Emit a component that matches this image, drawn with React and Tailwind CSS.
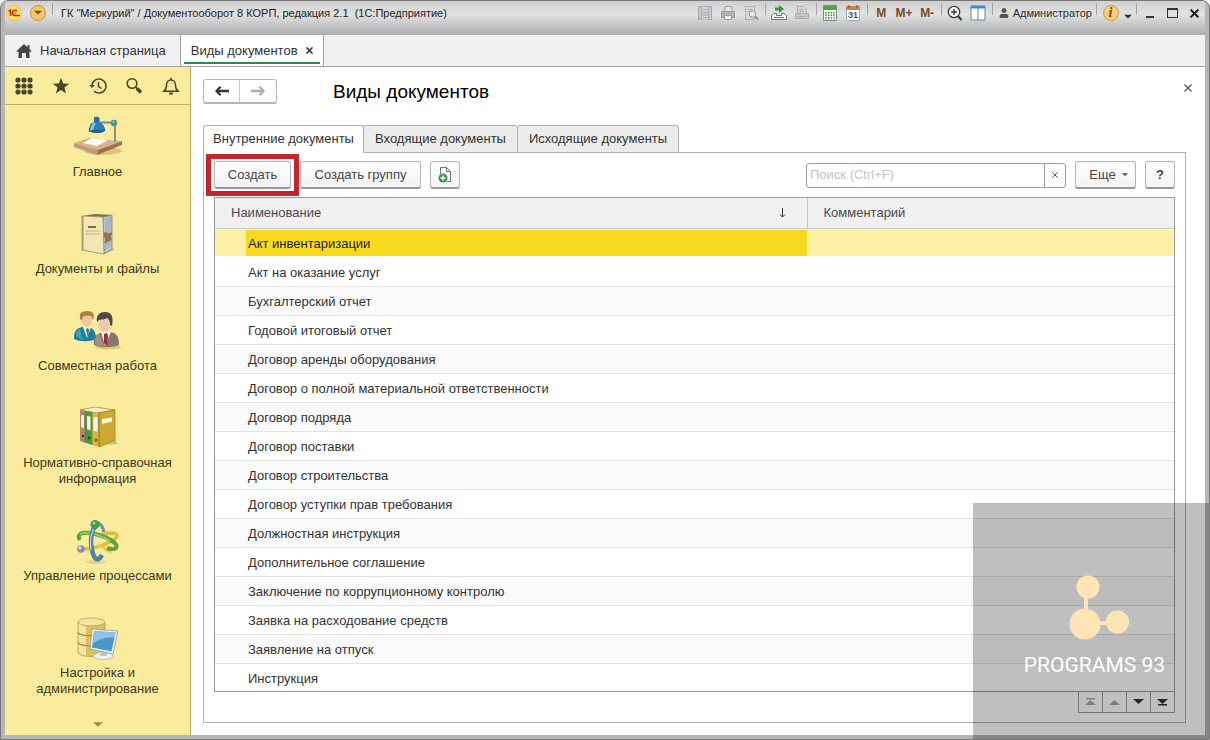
import React from 'react';
import { FaUser } from 'react-icons/fa';

const SECTIONS = [
    { label: 'Главное', Icon: LampIcon },
    { label: 'Документы и файлы', Icon: BookIcon },
    { label: 'Совместная работа', Icon: PeopleIcon },
    { label: 'Нормативно-справочная информация', Icon: BindersIcon },
    { label: 'Управление процессами', Icon: OrbitIcon },
    { label: 'Настройка и администрирование', Icon: DatabaseIcon },
];

const TABS = [
    { label: 'Внутренние документы', width: 'w-[161px]' },
    { label: 'Входящие документы', width: 'w-[155px]' },
    { label: 'Исходящие документы', width: 'w-[162px]' },
];

const ROWS = [
    'Акт инвентаризации',
    'Акт на оказание услуг',
    'Бухгалтерский отчет',
    'Годовой итоговый отчет',
    'Договор аренды оборудования',
    'Договор о полной материальной ответственности',
    'Договор подряда',
    'Договор поставки',
    'Договор строительства',
    'Договор уступки прав требования',
    'Должностная инструкция',
    'Дополнительное соглашение',
    'Заключение по коррупционному контролю',
    'Заявка на расходование средств',
    'Заявление на отпуск',
    'Инструкция',
];

/* ---------- Section icons ---------- */

function LampIcon() {
    return (
        <svg width="52" height="44" viewBox="0 0 52 44" aria-hidden="true">
            <ellipse cx="31" cy="35" rx="19" ry="4" fill="#c9b76d" opacity=".7" />
            <path d="m2 27 15-5 33 3-24 9z" fill="#d9b48b" />
            <path d="m2 27 24 7-1 5L2 31z" fill="#c09a74" />
            <path d="m26 34-1 5 25-10v-4z" fill="#9a7253" />
            <path d="m11 27 9-5 16 2-11 6z" fill="#fffdf0" />
            <path d="M27 6.500h14" stroke="#6d8c9b" strokeWidth="1.800" />
            <path d="M43 8v18" stroke="#7b8a8d" strokeWidth="1.800" />
            <circle cx="42" cy="7" r="3.200" fill="#41928d" />
            <circle cx="41.500" cy="6" r="1.100" fill="#9fd0c8" />
            <path d="M22 1.500c1-1 4-1 5.500 0V7h-5.500z" fill="#2c6f9d" />
            <path d="M20.500 6.500h8c2 1 4.500 4.500 5 8-4 3-12.500 3-17 .5.300-3.500 1.500-7 4-8.500z" fill="#2b7db2" />
            <path d="M21.500 7h2.500c-1.500 2-2.500 5-2.700 8.500l-3.300-.8c.3-3 1.500-6 3.500-7.700z" fill="#86c3e2" />
            <path d="M17 15c4-1.500 12-1.800 16 0-3 2.500-12 2.500-16 0z" fill="#1e5f8f" />
        </svg>
    );
}

function BookIcon() {
    return (
        <svg width="52" height="44" viewBox="0 0 52 44" aria-hidden="true">
            <path d="m18 36 14 5 11-4-6-4z" fill="#b39e55" opacity=".5" />
            <path d="m10 3 13-2 17 1-9 2z" fill="#7c6f4c" />
            <path d="m31 4 9-2v34l-8 5z" fill="#b9c6cc" stroke="#63747c" strokeWidth=".7" />
            <path d="M34 5v32M36 4v31M38 3v31" stroke="#8799a2" strokeWidth=".6" />
            <path d="m10 3 21 1 1 37-22-4z" fill="#f3e6b5" stroke="#9a8a59" strokeWidth=".8" />
            <path d="M10 3v34l1.500.5V3.200z" fill="#a89a6c" />
            <path d="M16 14h8" stroke="#4c4634" strokeWidth="1.600" />
            <path d="M14 18h14M14 21h14" stroke="#b7aa80" strokeWidth=".9" />
            <path d="m33 19 3 2 4-1-2 3 1 4-3 1-3 2 1-4-2-3z" fill="#a07050" stroke="#714729" strokeWidth=".5" />
        </svg>
    );
}

function PeopleIcon() {
    return (
        <svg width="52" height="44" viewBox="0 0 52 44" aria-hidden="true">
            <ellipse cx="36" cy="37" rx="13" ry="2.500" fill="#c7b266" opacity=".6" />
            <path d="M2 29c0-7 1-10 8-12h7c5 2 7 5 7 12-6 3-16 3-22 0z" fill="#1f7f9f" />
            <path d="m11 17 4 11 4-11z" fill="#eef6f6" />
            <path d="m14 19 2-1 1 2-1 8z" fill="#2d7a54" />
            <path d="M4 26c0-4 1-6 4-7l3 11z" fill="#3ea0bb" />
            <ellipse cx="15" cy="10" rx="5" ry="7" fill="#efc7a0" />
            <path d="M9 11C6 4 9 1 15 1s8 3 6 9l-2-4c-3 0-7-1-8 1z" fill="#b08040" />
            <path d="M22 35c-1-8 2-11 9-13h7c7 1 9 5 9 13-7 3-17 3-25 0z" fill="#85776b" />
            <path d="m29 22 4 14 6-14z" fill="#f6f1ee" />
            <path d="m32 24 3-1 1 3-1 10-3-3z" fill="#a22732" />
            <path d="M23 34c0-6 1-8 4-10l5 12c-4 0-7-1-9-2z" fill="#a09182" />
            <ellipse cx="32" cy="14" rx="6" ry="8" fill="#efc9a9" />
            <path d="M25 12c-1-6 2-10 8-10s9 4 7 14l-2-1c0-4-1-6-3-7-3 2-6 1-8 2z" fill="#4a4849" />
        </svg>
    );
}

function BindersIcon() {
    return (
        <svg width="52" height="44" viewBox="0 0 52 44" aria-hidden="true">
            <path d="m28 38 17-1-2-7z" fill="#b79d46" opacity=".6" />
            <path d="M8 3 23 0l20 3-18 3z" fill="#f6efcb" stroke="#9f8a3b" strokeWidth=".8" />
            <path d="m8 3 5 .8v32L8 34z" fill="#b08a68" />
            <path d="m13 4 7 1v33l-7-2.500z" fill="#4a9a4b" />
            <path d="m20 5 7 1v34l-7-2z" fill="#d9b63b" />
            <path d="m27 6 16-3v30l-16 7z" fill="#cda934" stroke="#8d731d" strokeWidth=".6" />
            <path d="m30 12 10-1.500v4L30 17z" fill="#fdf8df" />
            <path d="m9 8 3 .5v13L9 20zM15 9l3.500.5v14L15 22zM21.500 10l4 .5v14l-4-.5z" fill="#f5f7ea" />
            <circle cx="11" cy="29" r="1.200" fill="#523624" />
            <circle cx="17" cy="31" r="1.400" fill="#1f5524" />
            <circle cx="24" cy="33" r="1.500" fill="#6d5716" />
            <path d="M13 4v32M20 5v33M27 6v33" stroke="#6f6331" strokeWidth=".5" />
        </svg>
    );
}

function OrbitIcon() {
    return (
        <svg width="52" height="44" viewBox="0 0 52 44" fill="none" aria-hidden="true">
            <ellipse cx="24" cy="42" rx="10" ry="2" fill="#d3c27d" opacity=".6" />
            <path d="M10 29c14 0 35-8 35-13.500 0-3-8-3-15-1" stroke="#dfbd42" strokeWidth="3.600" />
            <path d="m27 25 11 6.500 1-5" stroke="#e6c550" strokeWidth="3" />
            <path d="M8 20c-5-8 6-9 19-5 13 4 20 10 17 13-2 2-6 1-9 0" stroke="#5fa33c" strokeWidth="4" />
            <path d="M8 14c7-3 22 1 30 7" stroke="#aed777" strokeWidth="1.200" />
            <path d="M24 5c-5 6-6 16-4 25 2 10 6 12 10 5" stroke="#4b83a4" strokeWidth="4.600" />
            <path d="M21.500 9c-3 6-3.500 14-2.500 21" stroke="#b5d3e2" strokeWidth="1.300" />
            <path d="M26 3c3 1 5 4 6 9" stroke="#6795ac" strokeWidth="3" />
            <circle cx="23" cy="4.500" r="4.500" fill="#419b4b" />
            <circle cx="22" cy="3" r="1.600" fill="#96d39a" />
            <circle cx="9" cy="29" r="3.800" fill="#84949a" />
            <circle cx="8" cy="28" r="1.400" fill="#e4ecef" />
        </svg>
    );
}

function DatabaseIcon() {
    return (
        <svg width="52" height="44" viewBox="0 0 52 44" aria-hidden="true">
            <path d="M6 5v30c0 6 27 6 27 0V5z" fill="#dcc160" />
            <path d="M6 5v30c0 2 3 3.500 8 4V7z" fill="#f4e6a1" />
            <ellipse cx="19.500" cy="5" rx="13.500" ry="4" fill="#f2e4a4" stroke="#b89d43" strokeWidth=".8" />
            <path d="M6 15c0 5 27 5 27 0M6 25c0 5 27 5 27 0" fill="none" stroke="#a78b34" strokeWidth="1.200" />
            <path d="M6 5v30c0 6 27 6 27 0V5" fill="none" stroke="#b89d43" strokeWidth=".8" />
            <ellipse cx="31" cy="39" rx="10" ry="3.500" fill="#eef2f3" stroke="#9ba9b0" strokeWidth=".7" />
            <path d="m28 34 7 1v4h-7z" fill="#bac7cd" />
            <path d="m20 12 26 2-5 23-23-5z" fill="#eef3f5" stroke="#8699a3" strokeWidth=".8" />
            <path d="m22 14 21.500 1.500-4 19L20 30.500z" fill="#4c97c4" />
            <path d="m22 14 21.500 1.500-1 5C34 20 27 22 21 26z" fill="#8cc4e2" />
        </svg>
    );
}

/* ---------- Small icons ---------- */

function HomeIcon() {
    return (
        <svg width="16" height="14" viewBox="0 0 16 14" fill="#444" aria-hidden="true">
            <path d="M8 0 0 7.500h2.500V14H6V9h4v5h3.500V7.500H16l-2.500-2.400V1h-2v2.200z" />
        </svg>
    );
}

function GridIcon() {
    return (
        <svg width="18" height="18" viewBox="0 0 18 18" fill="#4a4522" aria-hidden="true">
            {[3, 9, 15].map((y) => [3, 9, 15].map((x) => <circle key={`${x}-${y}`} cx={x} cy={y} r="2.600" />))}
        </svg>
    );
}

function StarIcon() {
    return (
        <svg width="18" height="18" viewBox="0 0 18 18" fill="#4a4522" aria-hidden="true">
            <path d="m9 .8 2.100 5.800 6.200.2-4.900 3.800 1.700 6L9 13.100l-5.100 3.500 1.700-6L.7 6.800l6.200-.2z" />
        </svg>
    );
}

function HistoryIcon() {
    return (
        <svg width="18" height="18" viewBox="0 0 18 18" fill="none" stroke="#4a4522" strokeWidth="1.500" aria-hidden="true">
            <path d="M3 9a7 7 0 1 1 2 4.900" />
            <path d="M.5 8 3 11l2.800-3z" fill="#4a4522" stroke="none" />
            <path d="M9.500 5v4.500l3 2" />
        </svg>
    );
}

function SearchIcon() {
    return (
        <svg width="18" height="18" viewBox="0 0 18 18" fill="none" stroke="#4a4522" aria-hidden="true">
            <circle cx="7" cy="6.500" r="4.800" strokeWidth="1.600" />
            <path d="m10.500 10 2 2" strokeWidth="1.600" />
            <path d="m12 11.500 4 4" strokeWidth="3.400" />
        </svg>
    );
}

function BellIcon() {
    return (
        <svg width="18" height="18" viewBox="0 0 18 18" fill="none" stroke="#4a4522" strokeWidth="1.500" aria-hidden="true">
            <path d="M9 .8v2M2 14.200c2-1.500 2.500-3 2.500-6C4.500 5 6.500 3 9 3s4.500 2 4.500 5.200c0 3 .5 4.500 2.500 6z" />
            <path d="M7.200 16.500h3.600" strokeWidth="1.800" />
        </svg>
    );
}

function ArrowIcon({ className }) {
    return (
        <svg width="14" height="10" viewBox="0 0 14 10" className={className} fill="none" stroke="currentColor" aria-hidden="true">
            <path d="M14 5H3" strokeWidth="2.400" />
            <path d="M5.500.8 1.500 5l4 4.200" strokeWidth="2.200" />
        </svg>
    );
}

function LogoIcon() {
    return (
        <svg width="16" height="16" viewBox="0 0 16 16" aria-hidden="true">
            <circle cx="8" cy="8" r="7.500" fill="#fbdf5a" stroke="#e7c14b" strokeWidth=".8" />
            <path d="m2.500 6.500 2-1.500v6" fill="none" stroke="#c5281c" strokeWidth="1.500" />
            <path d="M11 6.200A2.600 2.600 0 1 0 9 10.500h5" fill="none" stroke="#c5281c" strokeWidth="1.500" />
            <circle cx="9" cy="8" r=".8" fill="#c5281c" />
        </svg>
    );
}

function SaveIcon() {
    return (
        <svg width="16" height="16" viewBox="0 0 16 16" fill="none" stroke="#a3a9ae" aria-hidden="true">
            <path d="M1.500 1.500h13v13h-13z" fill="#c5c9cd" />
            <path d="M4.500 2v5h7V2M4.500 14.500V10h7v4.500M5.500 4.500h5M6 12.500h4" fill="#d6d9dc" />
        </svg>
    );
}

function PrintIcon() {
    return (
        <svg width="16" height="16" viewBox="0 0 16 16" fill="none" stroke="#9a9ea3" aria-hidden="true">
            <path d="M4.500 6 5.500 1.500h6l1 4.500" fill="#e3e5e6" />
            <path d="M1.500 6.500h13v6h-13z" fill="#b0b4b7" />
            <path d="M4.500 10.500h7v4h-7z" fill="#eceeee" />
            <path d="M3 8.500h2" />
        </svg>
    );
}

function PreviewIcon() {
    return (
        <svg width="16" height="16" viewBox="0 0 16 16" fill="none" stroke="#a8adb1" aria-hidden="true">
            <path d="M2.500 1.500h9v13h-9z" fill="#d8dbdd" />
            <path d="M4.500 4.500h5M4.500 6.500h3" />
            <circle cx="9.500" cy="9" r="3.300" fill="#e3e6e8" stroke="#8e9499" />
            <path d="m12 11.500 3 3" stroke="#8e9499" strokeWidth="2" />
        </svg>
    );
}

function SendIcon() {
    return (
        <svg width="18" height="16" viewBox="0 0 18 16" aria-hidden="true">
            <path d="M5 2.500h4V0l5 4-5 4V5.500H5z" fill="#2e9b35" />
            <path d="M1.500 10.500 4 8.500h2.500v2h5v-2H14l2.500 2v4h-15z" fill="#f5f5f5" stroke="#70777c" />
            <path d="M4 12.500h10" stroke="#70777c" />
        </svg>
    );
}

function CopyIcon() {
    return (
        <svg width="16" height="16" viewBox="0 0 16 16" fill="none" stroke="#a9adb0" aria-hidden="true">
            <path d="M3.500 8.500v-7h6l3 3v4" fill="#d5d7d9" />
            <path d="M1.500 8.500h13v5h-13z" fill="#c5c8ca" />
            <path d="M5.500 4.500h3M5.500 6.500h5M4 11.500h8" />
        </svg>
    );
}

function CalculatorIcon() {
    return (
        <svg width="14" height="16" viewBox="0 0 14 16" aria-hidden="true">
            <path d="M.5.500h13v15H.5z" fill="#f6faf4" stroke="#79907a" />
            <path d="M1 1h12v4H1z" fill="#4ca54a" />
            <path d="M3 7v8M5.700 7v8M8.400 7v8M11 7v8" stroke="#4f8650" strokeWidth="1.400" strokeDasharray="1.500 1" />
        </svg>
    );
}

function CalendarIcon() {
    return (
        <svg width="14" height="16" viewBox="0 0 14 16" aria-hidden="true">
            <path d="M.5 1.500h13v14H.5z" fill="#fff" stroke="#9fa5ad" />
            <path d="M0 1h14v4H0z" fill="#ca8255" />
            <path d="M3 0v3M11 0v3" stroke="#80492b" />
            <text x="7" y="13" textAnchor="middle" fontSize="9" fontFamily="Liberation Sans" fill="#3f5a78">31</text>
        </svg>
    );
}

function ZoomIcon() {
    return (
        <svg width="16" height="16" viewBox="0 0 16 16" fill="none" stroke="#3b3b3b" aria-hidden="true">
            <circle cx="7" cy="7" r="5.700" fill="#fafafa" strokeWidth="1.300" />
            <path d="M4 7h6M7 4v6" strokeWidth="1.500" />
            <path d="m11 11 3.500 4" strokeWidth="2" />
        </svg>
    );
}

function SplitIcon() {
    return (
        <svg width="16" height="16" viewBox="0 0 16 16" aria-hidden="true">
            <path d="M1 1h14v14H1z" fill="#fff" stroke="#5c87a8" />
            <path d="M1 1h14v2.500H1z" fill="#3b8dbf" />
            <path d="M8 3v12" stroke="#5c87a8" />
        </svg>
    );
}

function NewDocIcon() {
    return (
        <svg width="16" height="18" viewBox="0 0 16 18" fill="none" aria-hidden="true">
            <path d="M3.500 8V1.500h6l4 4v10h-4" stroke="#70757a" />
            <path d="M9.500 1.500v4h4" stroke="#70757a" />
            <circle cx="6" cy="12" r="4.500" fill="#3a9a48" />
            <path d="M3.500 12h5M6 9.500v5" stroke="#fff" strokeWidth="1.400" />
        </svg>
    );
}

function CloseIcon({ size = 8, weight = 1.3 }) {
    return (
        <svg width={size} height={size} viewBox="0 0 8 8" stroke="currentColor" strokeWidth={weight} aria-hidden="true">
            <path d="m.5.500 7 7M7.500.500l-7 7" />
        </svg>
    );
}

function CaretIcon({ up, bar, className }) {
    return (
        <svg width="11" height="8" viewBox="0 0 11 8" className={className} fill="currentColor" aria-hidden="true">
            <path d={up ? 'M0 7h11L5.500 2z' : 'M0 1h11L5.500 6z'} />
            {bar && <path d={up ? 'M1 0h9v1.500H1z' : 'M1 6h9v1.500H1z'} />}
        </svg>
    );
}

/* ---------- Window parts ---------- */

function TitleButton({ label, children }) {
    return (
        <button aria-label={label} className="flex h-5 w-[23px] items-center justify-center text-xs font-bold text-[#7b4a2b]">
            {children}
        </button>
    );
}

function Separator() {
    return <span className="mx-0.5 h-3 w-px self-start bg-[#a5a5a5]" />;
}

function TitleBar() {
    return (
        <header className="flex h-[34px] items-start bg-linear-to-b from-[#cfcfcf] via-[#e2e2e2] via-40% to-[#abacae] pt-0.5 pl-px">
            <div className="flex h-5 items-center">
                <LogoIcon />
                <button aria-label="Главное меню" className="ml-2 flex size-4 items-center justify-center rounded-full border border-[#c78f35] bg-[#f5c766] text-[#744c15]">
                    <CaretIcon className="w-2" />
                </button>
            </div>
            <span className="mr-2 ml-1.5 h-3 w-px bg-[#a5a5a5]" />
            <span className="truncate text-[11px] leading-5 text-[#1c1c1c]">
                ГК "Меркурий" / Документооборот 8 КОРП, редакция 2.1&nbsp; (1С:Предприятие)
            </span>
            <div className="ml-auto flex h-5 shrink-0 items-center">
                <TitleButton label="Сохранить"><SaveIcon /></TitleButton>
                <TitleButton label="Печать"><PrintIcon /></TitleButton>
                <TitleButton label="Предварительный просмотр"><PreviewIcon /></TitleButton>
                <Separator />
                <TitleButton label="Отправить"><SendIcon /></TitleButton>
                <TitleButton label="Копировать"><CopyIcon /></TitleButton>
                <Separator />
                <TitleButton label="Калькулятор"><CalculatorIcon /></TitleButton>
                <TitleButton label="Календарь"><CalendarIcon /></TitleButton>
                <Separator />
                <TitleButton>M</TitleButton>
                <TitleButton>M+</TitleButton>
                <TitleButton>M-</TitleButton>
                <Separator />
                <TitleButton label="Масштаб"><ZoomIcon /></TitleButton>
                <TitleButton label="Панели"><SplitIcon /></TitleButton>
                <Separator />
                <button className="flex h-5 items-center gap-1 pr-0.5 pl-1 text-[11px] text-[#2b2b2b]">
                    <FaUser size={10} className="text-[#555]" />
                    Администратор
                </button>
                <Separator />
                <TitleButton label="О программе">
                    <span className="flex size-4 items-center justify-center rounded-full border border-[#d39a3c] bg-[#f8cf7c] font-['Liberation_Serif',serif] text-sm leading-4 italic text-[#6d4c17]">i</span>
                </TitleButton>
                <button aria-label="Ещё" className="flex h-5 w-3 items-end justify-center pb-0.5 text-[#333]">
                    <CaretIcon className="w-2" />
                </button>
                <Separator />
                <button aria-label="Свернуть" className="flex h-5 w-[22px] items-center justify-center pt-2">
                    <span className="h-0.5 w-2 bg-[#333]" />
                </button>
                <button aria-label="Развернуть" className="flex h-5 w-[22px] items-center justify-center">
                    <span className="h-2.5 w-[11px] border border-t-2 border-[#333]" />
                </button>
                <button aria-label="Закрыть" className="flex h-5 w-[22px] items-center justify-center text-[#222]">
                    <CloseIcon size={9} weight={1.8} />
                </button>
            </div>
        </header>
    );
}

function PageTabs() {
    return (
        <nav className="flex h-8 border-b border-[#a0a0a0] bg-[#f1f1f1] text-[13px] text-[#333]">
            <button className="flex items-center gap-2 border-r border-[#a0a0a0] pr-3.5 pl-[11px]">
                <HomeIcon />
                Начальная страница
            </button>
            <div className="flex flex-col border-r border-[#a0a0a0] bg-white px-[3px]">
                <div className="flex flex-1 items-center gap-2 px-[7px] pt-1">
                    <button>Виды документов</button>
                    <button aria-label="Закрыть вкладку"><CloseIcon size={7} weight={1.8} /></button>
                </div>
                <span className="mb-0.5 h-0.5 bg-[#2c8a52]" />
            </div>
        </nav>
    );
}

function Sidebar() {
    return (
        <aside className="flex w-[186px] shrink-0 flex-col border-r border-[#b3a668] bg-[#faec9c]">
            <div className="flex h-[38px] items-center justify-between border-b border-[#c3b04f] px-2.5 text-[#4a4522]">
                <button aria-label="Все функции"><GridIcon /></button>
                <button aria-label="Избранное"><StarIcon /></button>
                <button aria-label="История"><HistoryIcon /></button>
                <button aria-label="Поиск"><SearchIcon /></button>
                <button aria-label="Оповещения"><BellIcon /></button>
            </div>
            <nav className="flex flex-col items-center gap-[33px] pt-[11px]">
                {SECTIONS.map(({ label, Icon }) => (
                    <a key={label} href="#" className="flex w-40 flex-col items-center gap-1 text-center text-[13px] leading-4 text-[#3d371c]">
                        <Icon />
                        {label}
                    </a>
                ))}
            </nav>
            <button aria-label="Прокрутить вниз" className="mt-auto flex justify-center pb-1.5 text-[#a58a2c]">
                <CaretIcon className="w-2.5" />
            </button>
        </aside>
    );
}

const BUTTON = 'flex h-7 items-center justify-center rounded-[3px] border border-b-2 border-[#b5b5b5] border-b-[#979797] bg-linear-to-b from-white to-[#f3f3f3] text-[13px] text-[#444]';

function Toolbar() {
    return (
        <div className="flex items-center gap-[9px]">
            <div className="relative">
                <button className={`${BUTTON} w-[77px]`}>Создать</button>
                <span className="pointer-events-none absolute -inset-x-2 -inset-y-[7px] border-[5px] border-[#c1272d]" />
            </div>
            <button className={`${BUTTON} w-[121px]`}>Создать группу</button>
            <button aria-label="Создать по шаблону" className={`${BUTTON} w-[30px]`}><NewDocIcon /></button>
            <div className="ml-auto flex h-[25px] w-[260px] rounded-[3px] border border-[#a0a0a0] bg-white">
                <input
                    type="text"
                    aria-label="Поиск"
                    placeholder="Поиск (Ctrl+F)"
                    className="min-w-0 flex-1 px-[3px] text-[13px] outline-none placeholder:text-[#c4c4c4]"
                />
                <button aria-label="Очистить" className="flex w-[21px] items-center justify-center border-l border-[#a0a0a0] text-[#555]">
                    <CloseIcon size={6} />
                </button>
            </div>
            <button className={`${BUTTON} w-[61px] gap-1.5 pl-1.5`}>
                Еще
                <CaretIcon className="w-1.5" />
            </button>
            <button aria-label="Справка" className={`${BUTTON} w-[30px] font-bold text-[#222]`}>?</button>
        </div>
    );
}

function DocumentTable() {
    return (
        <div className="border border-[#9a9a9a]">
            <table className="w-full table-fixed border-collapse text-left text-[13px] text-[#333]">
                <thead>
                    <tr className="h-[30px] border-b border-[#c8c8c8] bg-[#f1f1f1] text-[#4a4a4a]">
                        <th className="w-[592px] border-r border-[#c8c8c8] px-4 font-normal">
                            <div className="flex items-center justify-between">
                                Наименование
                                <svg width="7" height="10" viewBox="0 0 7 10" className="mr-[5px]" fill="none" stroke="#333" aria-hidden="true">
                                    <path d="M3.500 0v9M1 6.500 3.500 9 6 6.500" />
                                </svg>
                            </div>
                        </th>
                        <th className="px-4 font-normal">Комментарий</th>
                    </tr>
                </thead>
                <tbody>
                    {ROWS.map((name, i) => {
                        if (i === 0) {
                            return (
                                <tr key={name} className="h-[29px] text-[#222]">
                                    <td className="p-0">
                                        <div className="flex h-[26px] items-center bg-[#fbf0a4] pl-[31px]">
                                            <span className="flex h-full flex-1 items-center bg-[#f7da1f] pt-0.5 pl-0.5">{name}</span>
                                        </div>
                                    </td>
                                    <td className="p-0"><div className="h-[26px] bg-[#fbf0a4]" /></td>
                                </tr>
                            );
                        }
                        return (
                            <tr key={name} className="h-[29px] border-b border-[#e3e3e3] last:h-7 last:border-b-0 odd:bg-[#fafafa]">
                                <td className="pt-0.5 pb-0 pl-[33px]">{name}</td>
                                <td />
                            </tr>
                        );
                    })}
                </tbody>
            </table>
        </div>
    );
}

function Pager() {
    const cell = 'flex h-5 w-6 items-center justify-center border-r border-[#9a9a9a]';
    return (
        <div className="-mt-px flex self-end border border-r-0 border-[#9a9a9a]">
            <button aria-label="В начало" className={`${cell} text-[#aaa]`}><CaretIcon up bar /></button>
            <button aria-label="Вверх" className={`${cell} text-[#aaa]`}><CaretIcon up /></button>
            <button aria-label="Вниз" className={`${cell} text-[#333]`}><CaretIcon /></button>
            <button aria-label="В конец" className={`${cell} text-[#333]`}><CaretIcon bar /></button>
        </div>
    );
}

function Watermark() {
    return (
        <div className="pointer-events-none absolute right-0 bottom-0 flex size-[236px] flex-col items-end bg-black/25 pt-[72px] pr-11">
            <svg width="62" height="66" viewBox="0 0 62 66" className="mr-9" fill="#ffe4b5" aria-hidden="true">
                <path d="M17 20h4v20h-4zM28 46h14v4H28z" />
                <circle cx="21" cy="12" r="11.500" />
                <circle cx="18" cy="49" r="15.500" />
                <circle cx="50.500" cy="47" r="11.500" />
            </svg>
            <span className="mt-2 font-[Roboto] text-[21px] leading-8 text-white">PROGRAMS 93</span>
        </div>
    );
}

function App() {
    return (
        <div className="relative flex min-h-screen flex-col overflow-hidden rounded-t-lg border border-[#777] bg-[#b5b5b5] px-1 pb-1 font-['Liberation_Sans',Arial,sans-serif]">
            <TitleBar />
            <PageTabs />
            <div className="flex flex-1 bg-white">
                <Sidebar />
                <main className="flex min-w-0 flex-1 flex-col pt-3 pr-[19px] pb-3 pl-3">
                    {/* Page heading */}
                    <div className="flex h-[25px] items-center">
                        <div className="flex h-[25px] rounded-[3px] border border-b-2 border-[#b5b5b5]">
                            <button aria-label="Назад" className="flex w-9 items-center justify-center border-r border-[#c8c8c8] text-[#333]">
                                <ArrowIcon />
                            </button>
                            <button aria-label="Вперед" className="flex w-9 items-center justify-center text-[#aaa]">
                                <ArrowIcon className="rotate-180" />
                            </button>
                        </div>
                        <h1 className="ml-14 pt-0.5 text-[19px] text-black">Виды документов</h1>
                        <button aria-label="Закрыть" className="-mr-1.5 mb-2 ml-auto text-[#555]"><CloseIcon /></button>
                    </div>

                    {/* Document kind tabs */}
                    <div className="mt-[21px] flex text-[13px] text-[#333]" role="tablist">
                        {TABS.map(({ label, width }, i) => (
                            <button
                                key={label}
                                role="tab"
                                aria-selected={i === 0}
                                className={`-mb-px h-7 rounded-t-[3px] border border-[#b0b0b0] whitespace-nowrap ${width} ${
                                    i === 0 ? 'z-10 border-b-white bg-white' : '-ml-px bg-[#ececec]'
                                }`}
                            >
                                {label}
                            </button>
                        ))}
                    </div>
                    <section className="flex flex-1 flex-col border border-[#b0b0b0] px-2.5 pt-2">
                        <Toolbar />
                        <div className="h-2" />
                        <DocumentTable />
                        <Pager />
                    </section>
                </main>
            </div>
            <Watermark />
        </div>
    );
}

export default App;
